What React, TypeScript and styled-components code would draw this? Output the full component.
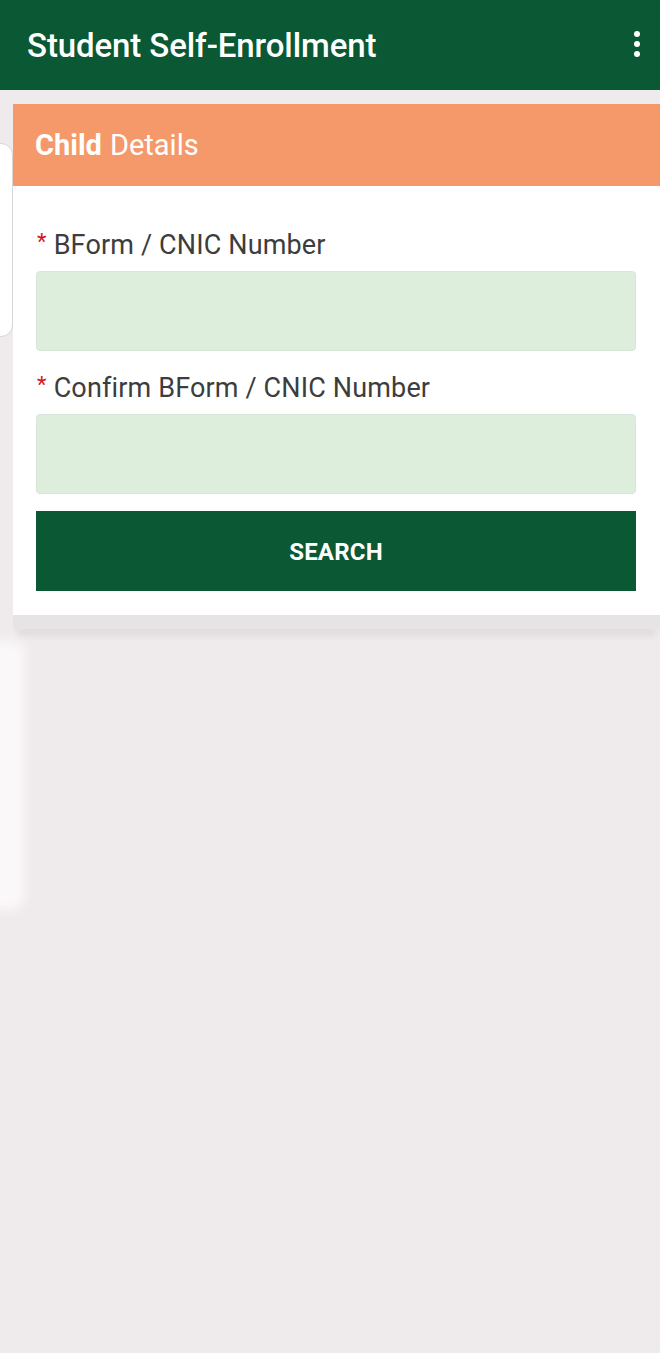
import React from "react";
import styled, { createGlobalStyle } from "styled-components";

const Global = createGlobalStyle`
  html, body { margin: 0; padding: 0; }
  body {
    background: #efeaec;
    font-family: Roboto, "Noto Sans", "Liberation Sans", sans-serif;
  }
`;

const Page = styled.div`
  position: relative;
  min-height: 1353px;
  background: #efeaec;
  overflow: hidden;
`;

const AppBar = styled.header`
  height: 90px;
  background: #0a5834;
  display: flex;
  align-items: center;
  justify-content: space-between;
  padding: 0 20px 0 27px;
  box-sizing: border-box;
`;

const Title = styled.h1`
  margin: 0;
  color: #ffffff;
  font-size: 33px;
  font-weight: 500;
  letter-spacing: -0.1px;
  line-height: 40px;
  padding-top: 2px;
`;

const MenuButton = styled.div`
  display: flex;
  flex-direction: column;
  gap: 4px;
  align-items: center;
  padding-bottom: 2px;
`;

const Dot = styled.span`
  width: 6px;
  height: 6px;
  border-radius: 50%;
  background: #ffffff;
`;

const Content = styled.main`
  padding: 14px 0 0 13px;
`;

const Card = styled.section`
  background: #ffffff;
  box-shadow: 0 12px 6px -4px rgba(0, 0, 0, 0.05);
  border-bottom: 14px solid #e7e4e5;
`;

const CardHeader = styled.div`
  height: 82px;
  background: #f5996a;
  display: flex;
  align-items: center;
  padding-left: 22px;
  color: #ffffff;
  font-size: 29px;
`;

const Strong = styled.span`
  font-weight: 700;
  margin-right: 8px;
`;

const Light = styled.span`
  font-weight: 400;
`;

const Body = styled.div`
  padding: 43px 24px 24px 23px;
  display: flex;
  flex-direction: column;
`;

const Field = styled.div<{ $spacing: number }>`
  display: flex;
  flex-direction: column;
  margin-bottom: ${(p) => p.$spacing}px;
`;

const Label = styled.label`
  font-size: 27px;
  color: #3d3d3d;
  line-height: 32px;
  letter-spacing: 0.15px;
  margin-bottom: 10px;
  display: flex;
  align-items: center;
`;

const Star = styled.span`
  color: #d11a1a;
  font-size: 22px;
  margin-right: 7px;
  margin-left: 1px;
  position: relative;
  top: -3px;
`;

const Input = styled.div`
  height: 80px;
  background: #deeedd;
  border: 1px solid #d6e6d8;
  border-radius: 4px;
  box-sizing: border-box;
`;

const SearchButton = styled.button`
  height: 80px;
  background: #0a5834;
  color: #ffffff;
  border: none;
  font-family: inherit;
  font-size: 24px;
  font-weight: 700;
  letter-spacing: 0.2px;
  padding-top: 3px;
  cursor: pointer;
`;

const SideSheet = styled.div`
  position: absolute;
  left: -20px;
  top: 143px;
  width: 31px;
  height: 192px;
  background: #ffffff;
  border: 1px solid #d8d6d7;
  border-radius: 12px;
`;

const SideGlow = styled.div`
  position: absolute;
  left: -20px;
  top: 640px;
  width: 45px;
  height: 270px;
  background: #fbf8f9;
  border-radius: 14px;
  filter: blur(6px);
`;

export default function App() {
  return (
    <Page>
      <Global />
      <AppBar>
        <Title>Student Self-Enrollment</Title>
        <MenuButton>
          <Dot />
          <Dot />
          <Dot />
        </MenuButton>
      </AppBar>
      <Content>
        <Card>
          <CardHeader>
            <Strong>Child</Strong>
            <Light>Details</Light>
          </CardHeader>
          <Body>
            <Field $spacing={21}>
              <Label>
                <Star>*</Star>BForm / CNIC Number
              </Label>
              <Input />
            </Field>
            <Field $spacing={17}>
              <Label>
                <Star>*</Star>Confirm BForm / CNIC Number
              </Label>
              <Input />
            </Field>
            <SearchButton>SEARCH</SearchButton>
          </Body>
        </Card>
      </Content>
      <SideSheet />
      <SideGlow />
    </Page>
  );
}
